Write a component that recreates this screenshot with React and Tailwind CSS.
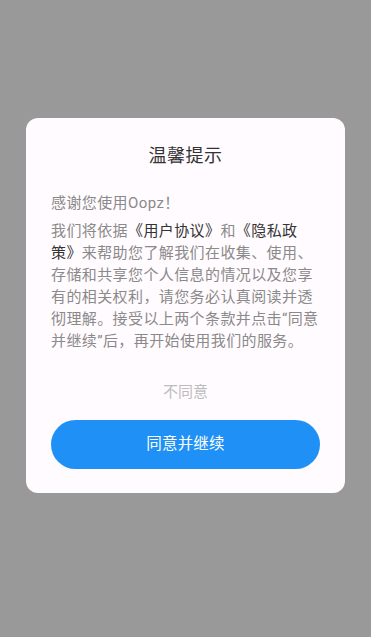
const FONT = "font-['Roboto','Noto_Sans_CJK_SC',sans-serif]";

const PrivacyDialog = () => {
    return (
        <div className="w-[319px] rounded-[12px] bg-[#fffbfe] px-[25px] pt-[25px] pb-[24px]">
            <h1 className="text-center text-[18px] leading-[26px] tracking-[0.5px] text-[#333333] font-normal">
                温馨提示
            </h1>

            <p className="mt-[23px] text-[15px] leading-[22px] tracking-[0.4px] text-[#8a8a8a]">
                感谢您使用Oopz！
            </p>

            <p className="mt-[6px] text-[15px] leading-[22px] tracking-[0.4px] text-[#8a8a8a]">
                我们将依据<span className="text-[#333333]">《用户协议》</span>和<span className="text-[#333333]">《隐私政策》</span>来帮助您了解我们在收集、使用、存储和共享您个人信息的情况以及您享有的相关权利，请您务必认真阅读并透彻理解。接受以上两个条款并点击“同意并继续”后，再开始使用我们的服务。
            </p>

            <button
                type="button"
                className="mt-[29px] block w-full text-center text-[15px] leading-[22px] text-[#bdbdbd]"
            >
                不同意
            </button>

            <button
                type="button"
                className="mt-[17px] block w-full h-[49px] rounded-full bg-[#1f91f6] text-white text-[15.5px] tracking-[0.2px]"
            >
                同意并继续
            </button>
        </div>
    );
};

const App = () => {
    return (
        <div className={`${FONT} min-h-screen h-[637px] bg-[#999999] flex items-center justify-center pb-[26px]`}>
            <PrivacyDialog />
        </div>
    );
};

export default App;
